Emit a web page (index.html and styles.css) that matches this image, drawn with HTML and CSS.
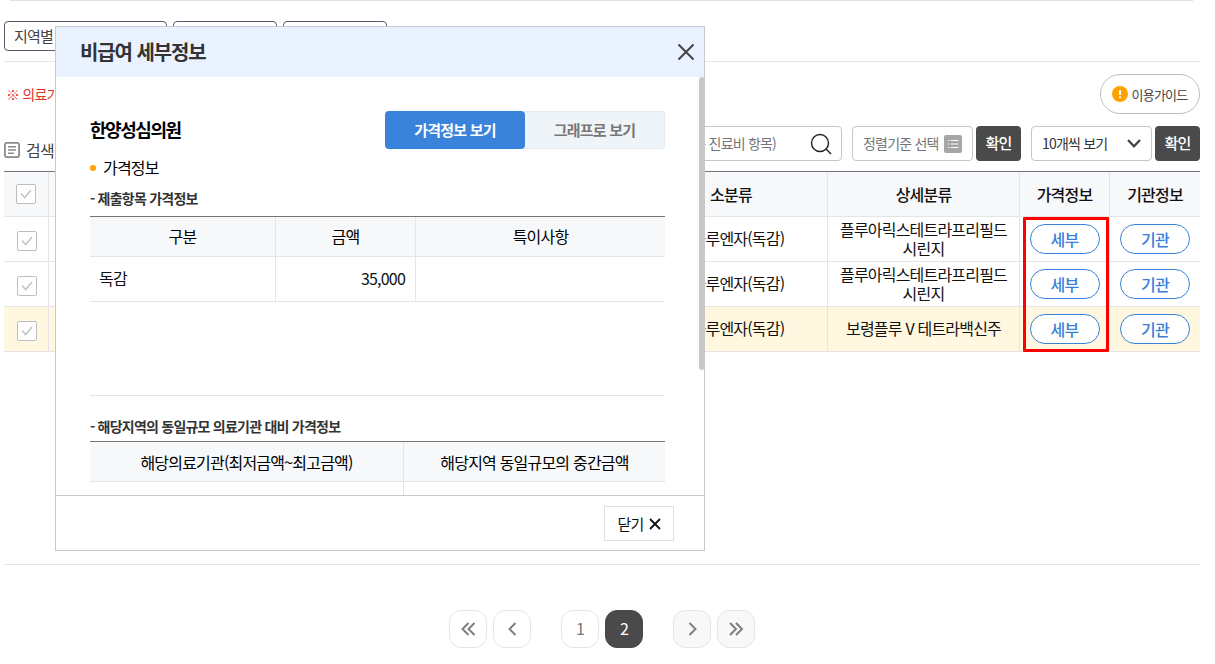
FILE: index.html
```
<!DOCTYPE html>
<html lang="ko">
<head>
<meta charset="utf-8">
<title>비급여 세부정보</title>
<link rel="stylesheet" href="styles.css">
</head>
<body>
<main class="page">
  <div class="top-line"></div>
  <div class="filters">
    <div class="filter filter-wide">지역별</div>
    <div class="filter"></div>
    <div class="filter"></div>
  </div>
  <div class="notice-row">
    <p class="notice">※ 의료기관</p>
    <button class="guide"><svg width="16" height="16" viewBox="0 0 16 16"><circle cx="8" cy="8" r="8" fill="#ffa200"/><path d="M8 4v5M8 10.5v1.7" stroke="#fff" stroke-width="2"/></svg>이용가이드</button>
  </div>
  <div class="toolbar">
    <div class="result-title"><svg width="16" height="16" viewBox="0 0 16 16" fill="none" stroke="#8c8c8c"><rect x=".9" y=".9" width="14.2" height="14.2" rx="2" stroke-width="1.8"/><path d="M4 4.8h8M4 8h8M4 11.2h6" stroke-width="1.6"/></svg>검색결과</div>
    <div class="field search"><span>또는 진료비 항목)</span><svg width="22" height="22" viewBox="0 0 22 22" fill="none" stroke="#222" stroke-width="1.4"><circle cx="10" cy="10" r="8.5"/><path d="M16 16l5 5"/></svg></div>
    <div class="field sort"><span>정렬기준 선택</span><svg width="18" height="18" viewBox="0 0 18 18"><rect width="18" height="18" rx="2" fill="#a5a5a5"/><path d="M4 5.5h1.5M7 5.5h7.5M4 9h1.5M7 9h7.5M4 12.5h1.5M7 12.5h7.5" stroke="#fff" stroke-width="1.1"/></svg></div>
    <button class="ok">확인</button>
    <div class="field count"><span>10개씩 보기</span><svg width="14" height="9" viewBox="0 0 14 9" fill="none" stroke="#444" stroke-width="2.2"><path d="M1 1l6 6.3L13 1"/></svg></div>
    <button class="ok ok-last">확인</button>
  </div>
  <div class="list">
    <div class="row head">
      <div class="cell"><i class="check"><svg width="12" height="10" viewBox="0 0 12 10"><path d="M1 4.5l3.7 4L11 1"/></svg></i></div>
      <div class="cell"></div><div class="cell">소분류</div><div class="cell">상세분류</div><div class="cell">가격정보</div><div class="cell">기관정보</div>
    </div>
    <div class="row">
      <div class="cell"><i class="check"><svg width="12" height="10" viewBox="0 0 12 10"><path d="M1 4.5l3.7 4L11 1"/></svg></i></div>
      <div class="cell"></div><div class="cell single">인플루엔자(독감)</div><div class="cell">플루아릭스테트라프리필드<br>시린지</div><div class="cell"><button class="pill">세부</button></div><div class="cell"><button class="pill">기관</button></div>
    </div>
    <div class="row">
      <div class="cell"><i class="check"><svg width="12" height="10" viewBox="0 0 12 10"><path d="M1 4.5l3.7 4L11 1"/></svg></i></div>
      <div class="cell"></div><div class="cell single">인플루엔자(독감)</div><div class="cell">플루아릭스테트라프리필드<br>시린지</div><div class="cell"><button class="pill">세부</button></div><div class="cell"><button class="pill">기관</button></div>
    </div>
    <div class="row selected">
      <div class="cell"><i class="check"><svg width="12" height="10" viewBox="0 0 12 10"><path d="M1 4.5l3.7 4L11 1"/></svg></i></div>
      <div class="cell"></div><div class="cell single">인플루엔자(독감)</div><div class="cell single">보령플루 V 테트라백신주</div><div class="cell"><button class="pill">세부</button></div><div class="cell"><button class="pill">기관</button></div>
    </div>
    <div class="highlight"></div>
  </div>
  <nav class="pager">
    <div class="pages">
      <button class="pg"><svg width="16" height="14" viewBox="0 0 16 14"><path d="M8.5 1l-6 6 6 6M14.5 1l-6 6 6 6"/></svg></button>
      <button class="pg"><svg width="16" height="14" viewBox="0 0 16 14"><path d="M11.5 1l-6 6 6 6"/></svg></button>
    </div>
    <div class="pages">
      <button class="pg">1</button>
      <button class="pg current">2</button>
    </div>
    <div class="pages">
      <button class="pg off"><svg width="16" height="14" viewBox="0 0 16 14"><path d="M5.5 1l6 6-6 6"/></svg></button>
      <button class="pg off"><svg width="16" height="14" viewBox="0 0 16 14"><path d="M2 1l6 6-6 6M8 1l6 6-6 6"/></svg></button>
    </div>
  </nav>
</main>

<section class="modal">
  <header class="modal-head">
    <h1>비급여 세부정보</h1>
    <svg width="18" height="18" viewBox="0 0 18 18"><path d="M1.5 1.5l15 15M16.5 1.5l-15 15" stroke="#444" stroke-width="2"/></svg>
  </header>
  <div class="modal-body">
    <div class="clinic">
      <h2>한양성심의원</h2>
      <div class="tabs"><button class="tab on">가격정보 보기</button><button class="tab">그래프로 보기</button></div>
    </div>
    <h3 class="bullet">가격정보</h3>
    <h4>- 제출항목 가격정보</h4>
    <div class="grid prices">
      <div class="th">구분</div><div class="th">금액</div><div class="th">특이사항</div>
      <div class="td">독감</div><div class="td num">35,000</div><div class="td"></div>
    </div>
    <div class="rule"></div>
    <h4 class="second">- 해당지역의 동일규모 의료기관 대비 가격정보</h4>
    <div class="grid compare">
      <div class="th">해당의료기관(최저금액~최고금액)</div><div class="th">해당지역 동일규모의 중간금액</div>
      <div class="td"></div><div class="td"></div>
    </div>
  </div>
  <footer class="modal-foot">
    <button class="close">닫기<svg width="12" height="12" viewBox="0 0 12 12"><path d="M1 1l10 10M11 1L1 11" stroke="#111" stroke-width="1.8"/></svg></button>
  </footer>
  <div class="thumb"></div>
</section>
</body>
</html>
```
FILE: styles.css
```
* { box-sizing: border-box; }
body {
  margin: 0;
  height: 664px;
  overflow: hidden;
  background: #fff;
  color: #111;
  font: 16px/19px "Noto Sans CJK KR", sans-serif;
  letter-spacing: -0.05em;
}
h1, h2, h3, h4, p { margin: 0; }
button { font: inherit; letter-spacing: inherit; padding: 0; border: 0; background: none; }
svg { display: block; flex: none; }

/* search page */
.page { width: 1196px; margin-left: 4px; }
.top-line { height: 1px; margin: 0 7px 0 6px; background: #d8e0e8; }
.filters { display: flex; gap: 6px; margin-top: 20px; padding-bottom: 10px; border-bottom: 1px solid #e5e5e5; }
.filter { width: 104px; height: 30px; padding-left: 9px; border: 1px solid #545b69; border-radius: 4px; font-size: 15px; line-height: 28px; color: #444; }
.filter-wide { width: 163px; }
.notice-row { display: flex; justify-content: space-between; align-items: center; height: 40px; margin-top: 12px; padding-left: 2px; }
.notice { font-size: 14px; color: #e0352f; }
.guide { display: flex; align-items: center; justify-content: center; gap: 4px; width: 100px; height: 40px; padding-right: 1px; border: 1px solid #bfbfbf; border-radius: 20px; font-size: 13px; color: #444; }
.toolbar { display: flex; align-items: center; margin-top: 12px; height: 35px; }
.result-title { display: flex; align-items: center; gap: 6px; width: 546px; padding-top: 13px; font-size: 16px; line-height: 17px; color: #444; }
.field { display: flex; align-items: center; justify-content: space-between; height: 35px; border: 1px solid #c6c6c9; border-radius: 4px; font-size: 14px; color: #757575; }
.search { width: 292px; padding: 0 9px; margin-right: 10px; }
.search span { flex: 1; text-align: right; margin-right: 34px; }
.sort { width: 121px; padding: 0 10px; margin-right: 3px; }
.ok { width: 45px; height: 35px; margin-right: 10px; padding-bottom: 2px; background: #4a4a4a; border-radius: 4px; color: #fff; font-size: 15px; font-weight: 500; }
.count { width: 121px; padding: 0 10px; margin-right: 3px; color: #333; }
.ok-last { margin-right: 0; }

.list { position: relative; margin-top: 10px; border-top: 1px solid #73777d; }
.row { display: grid; grid-template-columns: 45px 586px 193px 192px 90px 90px; height: 45px; border-bottom: 1px solid #e5e5e8; }
.cell { display: flex; align-items: center; justify-content: center; text-align: center; border-right: 1px solid #e5e5e8; }
.cell:last-child { border-right: 0; }
.cell:nth-child(2) { border-right: 0; }
.single { padding-bottom: 2px; }
.head { background: #f6f8fa; font-weight: 500; }
.selected { background: #fff7e0; }
.check { display: flex; align-items: center; justify-content: center; width: 20px; height: 20px; margin: 3px 0 0 2px; background: #fff; border: 1px solid #bcbec2; border-radius: 2px; }
.head .check { margin: 0; }
.check path { fill: none; stroke: #c2c4c8; stroke-width: 1.5; }
.pill { width: 70px; height: 30px; background: #fff; border: 1px solid #3982d9; border-radius: 15px; color: #3a7fd8; font-weight: 500; }
.highlight { position: absolute; left: 1019px; top: 45px; width: 86px; height: 135px; border: 3px solid #f00; border-radius: 1px; }

.pager { display: flex; justify-content: center; gap: 30px; margin-top: 212px; padding: 45px 0 0; width: 1196px; border-top: 1px solid #e5e5e5; }
.pages { display: flex; gap: 6px; }
.pg { display: flex; align-items: center; justify-content: center; width: 38px; height: 38px; padding-bottom: 1px; border: 1px solid #e5e5e5; border-radius: 12px; color: #777; }
.pg path { fill: none; stroke: #7b7b80; stroke-width: 1.9; }
.current { background: #4a4a4a; border-color: #4a4a4a; color: #fff; }
.off { background: #f8f8f8; }

/* detail dialog */
.modal { position: absolute; left: 55px; top: 26px; width: 650px; height: 525px; display: flex; flex-direction: column; background: #fff; border: 1px solid #c9c9cd; }
.modal-head { display: flex; align-items: center; justify-content: space-between; height: 50px; padding: 0 9px 0 24px; background: #eaf2ff; }
.modal-head h1 { padding-bottom: 2px; font-size: 20px; font-weight: 700; letter-spacing: -0.055em; color: #333; }
.modal-body { height: 418px; padding: 34px 39px 0 34px; overflow: hidden; }
.clinic { display: flex; align-items: center; justify-content: space-between; height: 38px; }
.clinic h2 { padding-bottom: 2px; font-size: 18px; font-weight: 700; letter-spacing: -0.08em; color: #000; }
.tabs { display: flex; width: 280px; height: 38px; background: #eff4f8; border-radius: 4px; }
.tab { width: 140px; padding-bottom: 2px; font-size: 15px; font-weight: 700; color: #777; border: 1px solid #e2e8ec; border-left: 0; border-radius: 0 4px 4px 0; }
.tab.on { background: #3983db; color: #fff; border: 0; border-radius: 4px; }
.bullet { display: flex; align-items: center; gap: 7px; margin-top: 9px; font-size: 16px; font-weight: 400; color: #000; }
.bullet::before { content: ""; width: 6px; height: 6px; border-radius: 50%; background: #ffa200; }
h4 { margin-top: 12px; font-size: 14px; font-weight: 700; letter-spacing: -0.055em; color: #333; }
.grid { display: grid; border-top: 1px solid #757575; color: #111; }
.prices { grid-template-columns: 186px 140px 249px; grid-template-rows: 40px 45px; margin-top: 8px; }
.compare { grid-template-columns: 314px 261px; grid-template-rows: 40px 45px; margin-top: 5px; }
.th, .td { display: flex; align-items: center; border-right: 1px solid #e5e5e8; border-bottom: 1px solid #e5e5e8; }
.th { justify-content: center; background: #f6f8fa; color: #000; }
.compare .th { padding-top: 2px; }
.td { padding: 0 10px 2px 9px; }
.prices > :nth-child(3n), .compare > :nth-child(2n) { border-right: 0; }
.num { justify-content: flex-end; }
.rule { height: 1px; margin-top: 93px; background: #e5e5e5; }
.second { margin-top: 21px; }
.modal-foot { display: flex; justify-content: flex-end; height: 55px; padding: 10px 30px 0 0; border-top: 1px solid #c9c9cd; }
.close { display: flex; align-items: center; justify-content: center; gap: 5px; width: 70px; height: 35px; padding-bottom: 1px; border: 1px solid #e1e1e1; font-size: 15px; color: #111; }
.close svg { margin-top: 1px; }
.thumb { position: absolute; left: 643px; top: 50px; width: 6px; height: 293px; background: #c8c8c8; border-radius: 3px; }
```
